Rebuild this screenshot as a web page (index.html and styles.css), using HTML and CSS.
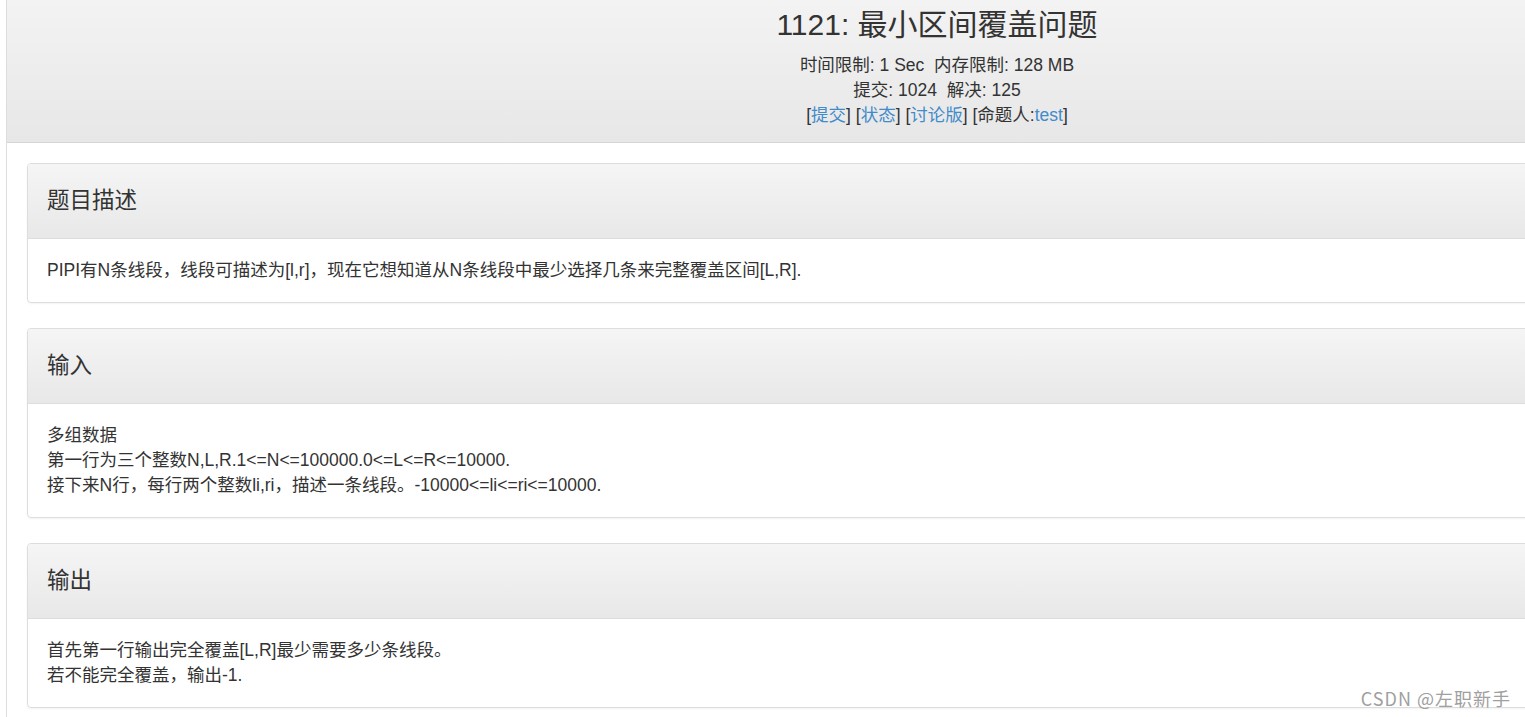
FILE: index.html
```html
<!DOCTYPE html>
<html lang="zh-CN">
<head>
  <meta charset="UTF-8">
  <title>1121: 最小区间覆盖问题</title>
  <link rel="stylesheet" href="styles.css">
</head>
<body>

<div class="page">
  <div class="jumbo">
    <h1>1121: 最小区间覆盖问题</h1>
    <div class="info">时间限制: 1 Sec&nbsp;&nbsp;内存限制: 128 MB</div>
    <div class="info">提交: 1024&nbsp;&nbsp;解决: 125</div>
    <div class="info">[<a href="#">提交</a>] [<a href="#">状态</a>] [<a href="#">讨论版</a>] [命题人:<a href="#">test</a>]</div>
  </div>

  <div class="content">
    <div class="panel">
      <div class="panel-heading">题目描述</div>
      <div class="panel-body">PIPI有N条线段，线段可描述为[l,r]，现在它想知道从N条线段中最少选择几条来完整覆盖区间[L,R].</div>
    </div>

    <div class="panel">
      <div class="panel-heading">输入</div>
      <div class="panel-body">
        多组数据<br>
        第一行为三个整数N,L,R.1&lt;=N&lt;=100000.0&lt;=L&lt;=R&lt;=10000.<br>
        接下来N行，每行两个整数li,ri，描述一条线段。-10000&lt;=li&lt;=ri&lt;=10000.
      </div>
    </div>

    <div class="panel">
      <div class="panel-heading">输出</div>
      <div class="panel-body">
        首先第一行输出完全覆盖[L,R]最少需要多少条线段。<br>
        若不能完全覆盖，输出-1.
      </div>
    </div>
  </div>
</div>

<div class="watermark">CSDN @左职新手</div>

</body>
</html>
```

FILE: styles.css
```css
html, body { margin: 0; padding: 0; background: #fff; overflow: hidden; }
body {
  font-family: "Liberation Sans", Arial, "Noto Sans CJK SC", sans-serif;
  font-size: 17.5px;
  line-height: 25px;
  color: #333;
}
a { color: #428bca; text-decoration: none; }

.page {
  margin-left: 6px;
  width: 1860px;
  border-left: 1px solid #ddd;
  min-height: 717px;
}

.jumbo {
  text-align: center;
  padding: 8px 0 14px;
  background: linear-gradient(to bottom, #f3f3f3 0%, #e7e7e7 100%);
  border-bottom: 1px solid #d6d6d6;
}
.jumbo h1 {
  margin: 0 0 11px;
  font-size: 30px;
  line-height: 34px;
  font-weight: normal;
  color: #333;
}

.content { padding: 20px 20px 0; }

.panel {
  border: 1px solid #ddd;
  border-radius: 4px;
  margin-bottom: 25px;
  box-shadow: 0 1px 2px rgba(0,0,0,0.05);
}
.panel-heading {
  padding: 20px 19px;
  font-size: 22.5px;
  line-height: 34px;
  background: linear-gradient(to bottom, #f5f5f5 0%, #e8e8e8 100%);
  border-bottom: 1px solid #ddd;
  border-radius: 3px 3px 0 0;
}
.panel-body {
  padding: 19px 19px 19px;
}

.watermark {
  position: absolute;
  right: 14px;
  bottom: 6px;
  font-size: 18px;
  letter-spacing: 1px;
  color: #a0a0a0;
  font-family: "Noto Sans CJK SC", "Noto Sans", sans-serif;
}
```
